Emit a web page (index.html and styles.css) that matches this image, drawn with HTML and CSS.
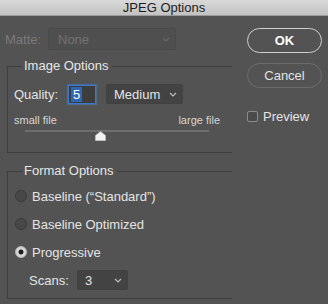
FILE: index.html
```html
<!DOCTYPE html>
<html lang="en">
<head>
    <meta charset="UTF-8">
    <meta name="viewport" content="width=device-width, initial-scale=1.0">
    <title>JPEG Options</title>
    <link rel="stylesheet" href="styles.css">
</head>
<body>
    <div class="titlebar">JPEG Options</div>
    <div class="dialog">
        <div class="settings">
            <div class="matte-row">
                <span class="dim-label">Matte:</span>
                <div class="select select-matte">
                    <span>None</span>
                    <svg class="chevron" width="8" height="5" viewBox="0 0 8 5"><polyline points="1,1 4,4 7,1"/></svg>
                </div>
            </div>

            <fieldset class="group group-image">
                <legend>Image Options</legend>
                <div class="quality-row">
                    <label for="quality">Quality:</label>
                    <div class="num-input" id="quality"><span class="selected-text">5</span></div>
                    <div class="select select-medium">
                        <span>Medium</span>
                        <svg class="chevron" width="8" height="5" viewBox="0 0 8 5"><polyline points="1,1 4,4 7,1"/></svg>
                    </div>
                </div>
                <div class="size-labels">
                    <span>small file</span>
                    <span>large file</span>
                </div>
                <div class="slider">
                    <div class="track"></div>
                    <svg class="thumb" style="left: 41%;" width="11" height="10" viewBox="0 0 11 10"><path d="M5.5 0.5 L10.5 4.5 L10.5 9.5 L0.5 9.5 L0.5 4.5 Z"/></svg>
                </div>
            </fieldset>

            <fieldset class="group group-format">
                <legend>Format Options</legend>
                <div class="radio-row"><span class="radio"></span>Baseline (“Standard”)</div>
                <div class="radio-row"><span class="radio"></span>Baseline Optimized</div>
                <div class="radio-row"><span class="radio radio-on"></span>Progressive</div>
                <div class="scans-row">
                    <span class="scans-label">Scans:</span>
                    <div class="select select-scans">
                        <span>3</span>
                        <svg class="chevron" width="8" height="5" viewBox="0 0 8 5"><polyline points="1,1 4,4 7,1"/></svg>
                    </div>
                </div>
            </fieldset>
        </div>

        <div class="actions">
            <button class="btn btn-default">OK</button>
            <button class="btn">Cancel</button>
            <div class="preview-row"><span class="checkbox"></span>Preview</div>
        </div>
    </div>
</body>
</html>
```

FILE: styles.css
```css
body {
    margin: 0;
    background-color: #535353;
    font-family: "Liberation Sans", Arial, Helvetica, sans-serif;
    font-size: 13px;
    color: #e4e4e4;
}
.titlebar {
    height: 16px;
    line-height: 16px;
    text-align: center;
    color: #1c1c1c;
    background: linear-gradient(#d9d9d9, #c2c2c2);
    border-bottom: 1px solid #9a9a9a;
    box-sizing: border-box;
}
.dialog {
    display: flex;
}
.settings {
    width: 232px;
    padding-top: 12px;
}
.matte-row {
    display: flex;
    align-items: center;
    height: 22px;
    padding-left: 5px;
}
.dim-label {
    color: #7a7a7a;
    width: 43px;
}
.select {
    display: flex;
    align-items: center;
    justify-content: space-between;
    box-sizing: border-box;
    padding: 0 5px 0 7px;
    background-color: #464646;
    border: 1px solid #414141;
    border-radius: 2px;
}
.chevron {
    fill: none;
    stroke: #bdbdbd;
    stroke-width: 1.2;
}
.select-matte {
    width: 128px;
    height: 22px;
    color: #727272;
    padding-left: 9px;
    background-color: #4f4f4f;
    border-color: #4a4a4a;
}
.select-matte .chevron {
    stroke: #6a6a6a;
}
.group {
    margin: 8px 0 0 7px;
    padding: 10px 0 11px 6px;
    border: 1px solid #3e3e3e;
    border-right: none;
    min-width: 0;
}
.group legend {
    margin-left: 8px;
    padding: 0 3px 0 2px;
    line-height: 16px;
    color: #e6e6e6;
}
.quality-row {
    display: flex;
    align-items: center;
    height: 20px;
}
.quality-row label {
    width: 54px;
}
.num-input {
    width: 28px;
    height: 19px;
    box-sizing: border-box;
    background-color: #3d3d3d;
    border: 1px solid #3a78cc;
    box-shadow: 0 0 1px 1px rgba(70, 130, 210, 0.5);
    padding: 1px 0 0 2px;
}
.selected-text {
    display: inline-block;
    background-color: #2f66b3;
    color: #ffffff;
    padding: 0 2px;
    line-height: 15px;
}
.select-medium {
    width: 77px;
    height: 20px;
    margin-left: 10px;
    background-color: #434343;
}
.size-labels {
    display: flex;
    justify-content: space-between;
    width: 206px;
    margin-top: 9px;
    font-size: 11px;
    line-height: 14px;
    color: #d6d6d6;
}
.slider {
    position: relative;
    width: 184px;
    height: 14px;
    margin-left: 11px;
}
.track {
    position: relative;
    top: 3px;
    height: 2px;
    background-color: #6e6e6e;
}
.thumb {
    position: absolute;
    top: 4px;
    margin-left: -5px;
    fill: #f2f2f2;
    stroke: #cfcfcf;
    stroke-width: 0.6;
}
.group-format {
    margin-top: 10px;
    padding: 8px 0 8px 7px;
}
.group-format legend {
    margin-left: 7px;
}
.radio-row {
    display: flex;
    align-items: center;
    height: 18px;
    margin-bottom: 10px;
}
.radio {
    width: 12px;
    height: 12px;
    box-sizing: border-box;
    border-radius: 50%;
    background-color: #484848;
    border: 1px solid #3a3a3a;
    margin-right: 5px;
}
.radio-on {
    background: radial-gradient(circle, #1e1e1e 0, #1e1e1e 2.2px, #d6d6d6 2.8px);
    border-color: #bcbcbc;
}
.scans-row {
    display: flex;
    align-items: center;
    height: 20px;
    margin-top: -1px;
    padding-left: 14px;
}
.scans-label {
    width: 48px;
}
.select-scans {
    width: 51px;
    height: 20px;
    background-color: #434343;
}
.actions {
    display: flex;
    flex-direction: column;
    margin-left: 15px;
    padding-top: 12px;
    width: 75px;
}
.btn {
    height: 25px;
    margin-bottom: 10px;
    border-radius: 13px;
    background-color: #535353;
    border: 1px solid #6c6c6c;
    color: #e2e2e2;
    font-family: "Liberation Sans", Arial, Helvetica, sans-serif;
    font-size: 13px;
    padding: 0;
}
.btn-default {
    border: 1.5px solid #cfcfcf;
    color: #ffffff;
    font-weight: bold;
}
.preview-row {
    display: flex;
    align-items: center;
    margin-top: 12px;
    height: 12px;
}
.checkbox {
    width: 11px;
    height: 11px;
    box-sizing: border-box;
    border: 1px solid #8c8c8c;
    border-radius: 2px;
    background-color: #4b4b4b;
    margin-right: 5px;
}
```
